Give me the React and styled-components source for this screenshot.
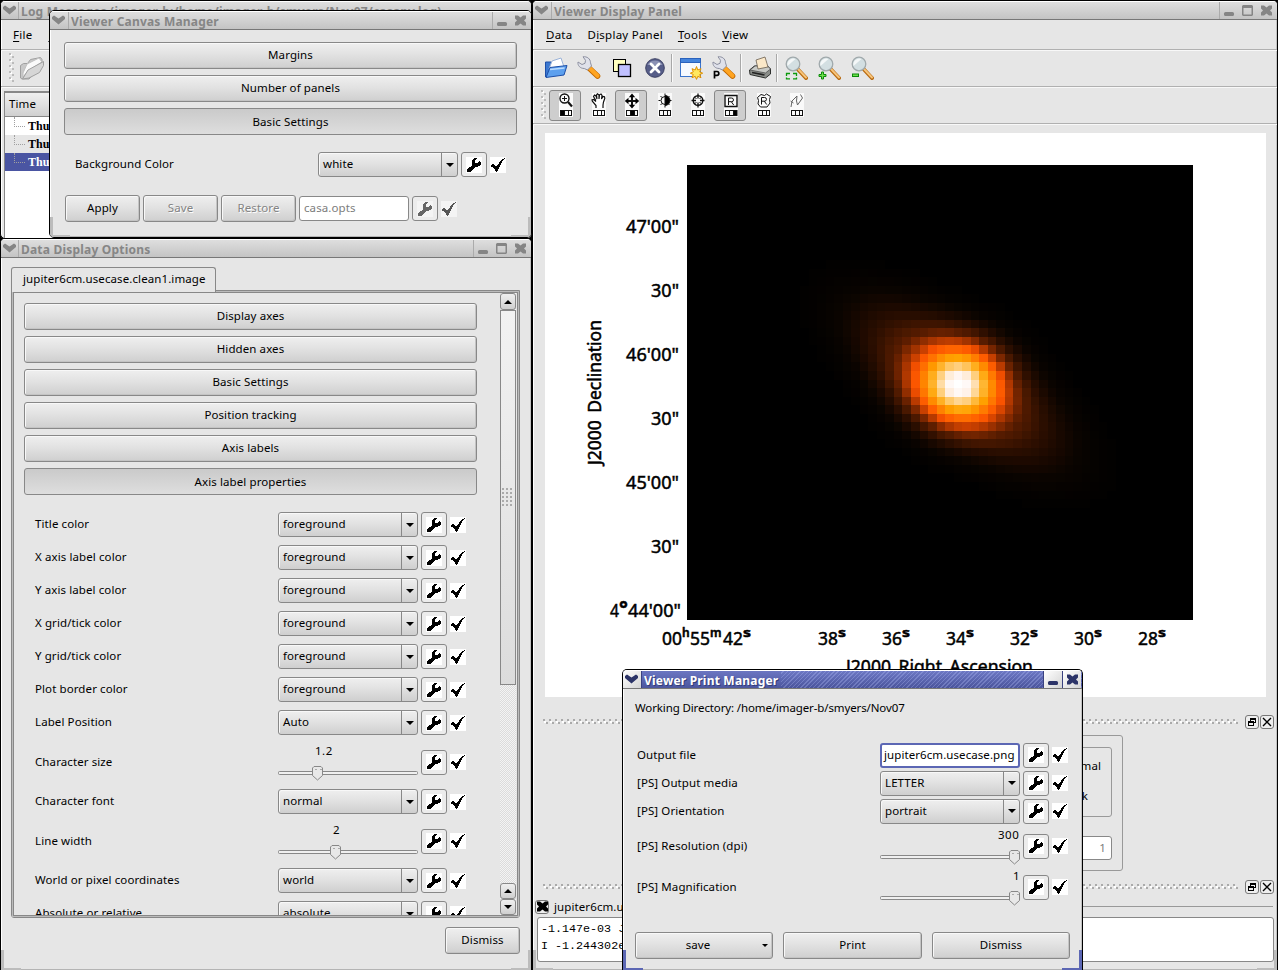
import React from "react";
import styled, { createGlobalStyle, css } from "styled-components";

const Global = createGlobalStyle`
  html, body { margin: 0; padding: 0; background: #000; overflow: hidden; }
  * { box-sizing: border-box; }
  #root { font-family: "Noto Sans", "DejaVu Sans", sans-serif; font-size: 11.5px; letter-spacing: 0.1px; color: #000; line-height: 16px; }
  svg { display: block; flex: none; }
`;

const Desktop = styled.main`
  position: relative;
  width: 1278px;
  height: 970px;
  overflow: hidden;
  background: #000;
`;

/* ---------- window frame ---------- */
const Frame = styled.section`
  position: absolute;
  left: ${(p) => p.$x}px;
  top: ${(p) => p.$y}px;
  width: ${(p) => p.$w}px;
  height: ${(p) => p.$h}px;
  display: flex;
  flex-direction: column;
  border: 1px solid #000;
  border-bottom-width: ${(p) => (p.$open ? 0 : 1)}px;
  border-radius: ${(p) => (p.$open ? "5px 5px 0 0" : "5px")};
  background: #e6e6e6;
  box-shadow: inset 1px 0 0 #fff, inset -1px 0 0 #c2c2c2, inset 0 -1px 0 #b4b4b4;
  overflow: hidden;
`;
const TitleBar = styled.header`
  height: 19px;
  flex: none;
  display: flex;
  align-items: stretch;
  padding-right: 1px;
  border-top: 1px solid #fff;
  border-bottom: 1px solid #777;
  background: ${(p) =>
    p.$active
      ? "repeating-linear-gradient(135deg, rgba(255,255,255,0) 0 2px, rgba(190,200,255,.28) 2px 3px), linear-gradient(#6d78c4, #4a549c)"
      : "linear-gradient(#dedede, #c4c4c4)"};
`;
const TitleText = styled.h1`
  margin: 0;
  flex: 1;
  min-width: 0;
  display: flex;
  align-items: center;
  white-space: nowrap;
  overflow: hidden;
  font-size: 12px;
  font-weight: 700;
  letter-spacing: 0.2px;
  line-height: 16px;
  color: ${(p) => (p.$active ? "#fff" : "#868686")};
  span {
    padding: 3px 3px 0 2px;
    ${(p) => p.$active && css`background: linear-gradient(#6d78c4, #4a549c); text-shadow: 1px 1px 0 #333c78;`}
  }
`;
const TitleButton = styled.span`
  width: ${(p) => p.$w || 19}px;
  flex: none;
  display: flex;
  align-items: center;
  justify-content: center;
  ${(p) => p.$active && css`background: linear-gradient(135deg, #fff, #d4d4d4); border-left: 1px solid #3a4280;`}
  ${(p) => p.$edge === "right" && css`border-right: 1px solid ${p.$active ? "#3a4280" : "#ababab"}; border-left: 0; padding-right: 1px;`}
  ${(p) => p.$edge === "left" && css`border-left: 1px solid ${p.$active ? "#3a4280" : "#ababab"};`}
`;

const Glyph = ({ kind, color }) => (
  <svg width="13" height="13" viewBox="0 0 13 13" fill={color}>
    {kind === "down" && <path d="M0 3 2 1.500l4.500 3L11 1.500 13 3v2L6.500 10.500 0 5z" />}
    {kind === "min" && <rect x="1" y="8" width="10" height="4" rx="1.500" />}
    {kind === "max" && <path d="M2 1h9l1 1v9l-1 1H2l-1-1V2zM2.500 4v6.500h8V4z" fillRule="evenodd" />}
    {kind === "close" && <path d="M1 1.500h3l2.500 2L9 1.500h3v3L10 6.500 12 8.500v3H9L6.500 9.500 4 11.500H1v-3l2-2L1 4.500z" />}
  </svg>
);

function Window({ x, y, w, h, title, buttons = [], active, open, menuWidth = 19, children }) {
  const ink = active ? "#2c3468" : "#858585";
  return (
    <Frame $x={x} $y={y} $w={w} $h={h} $open={open}>
      <TitleBar $active={active}>
        <TitleButton $w={menuWidth} $edge="right" $active={active}><Glyph kind="down" color={ink} /></TitleButton>
        <TitleText $active={active}><span>{title}</span></TitleText>
        {buttons.map((b, i) => (
          <TitleButton key={b} $edge={i === 0 ? "left" : ""} $active={active}><Glyph kind={b} color={ink} /></TitleButton>
        ))}
      </TitleBar>
      {children}
    </Frame>
  );
}

const Grip = styled.i`
  position: absolute;
  bottom: 0;
  ${(p) => p.$side}: 0;
  width: 20px;
  height: 20px;
  border: solid ${(p) => p.$color || "#bcbcbc"};
  border-width: 0 0 2px 0;
  ${(p) => (p.$side === "left" ? css`border-left-width: 3px;` : css`border-right-width: 3px;`)}
`;

/* ---------- bitmap glyphs ---------- */
const Bitmap = ({ rows, color = "#000", bg = "#fff", w = 16, h = 16 }) => {
  const runs = [];
  rows.forEach((r, y) => {
    for (const m of r.matchAll(/x+/g)) runs.push(<rect key={`${y}-${m.index}`} x={m.index} y={y} width={m[0].length} height="1" />);
  });
  return (
    <svg width={w} height={h} viewBox={`0 0 ${w} ${h}`} shapeRendering="crispEdges" fill={color}>
      <rect width={w} height={h} fill={bg} />
      {runs}
    </svg>
  );
};
const WRENCH = [
  "",
  "........xxx",
  ".......xxx",
  "......xxx",
  "......xxx....x",
  "......xxx...xxx",
  "......xxxxxxxxx",
  "......xxxxxxxxx",
  "......xxxxxxxx",
  ".....xxxxxxx",
  "...xxxxxx",
  "..xxxxxx",
  ".xxxxxx",
  ".xxxxx",
  ".xxxx",
  "",
];
const CHECK = [
  "",
  "..............x",
  "............xx",
  "...........xx",
  "..........xx",
  ".........xxx",
  ".........xx",
  "..xx....xxx",
  ".xxxx..xxx",
  ".xxxxxxxxx",
  "...xxxxxx",
  "....xxxxx",
  ".....xxx",
  ".....xxx",
  "......x",
  "",
];

/* ---------- widgets ---------- */
const raised = "linear-gradient(#efefef, #e2e2e2 45%, #cfcfcf)";
const PushButton = styled.button`
  width: ${(p) => (p.$w ? `${p.$w}px` : "100%")};
  height: 27px;
  flex: none;
  padding: ${(p) => (p.$down ? "1px 0 0" : "0 0 1px")};
  border: 1px solid #888;
  border-radius: 3px;
  background: ${(p) => (p.$down ? "linear-gradient(#cacaca, #dedede)" : raised)};
  box-shadow: ${(p) => (p.$down ? "none" : "inset 1px 1px 0 #f8f8f8, inset -1px -1px 0 #c4c4c4")};
  font: inherit;
  letter-spacing: inherit;
  color: ${(p) => (p.$dim ? "#848484" : "#000")};
  text-shadow: ${(p) => (p.$dim ? "1px 1px 0 #fff" : "none")};
  text-align: center;
`;
const Arrow = styled.i`
  width: 0;
  height: 0;
  border: solid transparent;
  ${(p) => (p.$up ? css`border-width: 0 4px 4px; border-bottom-color: #000;` : css`border-width: 4px 4px 0; border-top-color: #000;`)}
  ${(p) => p.$small && css`border-width: 3px 3px 0;`}
`;
const MenuButton = styled(PushButton)`
  display: flex;
  align-items: center;
  padding-right: 4px;
  span { flex: 1; padding-right: 2px; }
`;
const ComboBox = styled.div`
  width: 140px;
  height: 25px;
  flex: none;
  display: flex;
  border: 1px solid #888;
  border-radius: 3px;
  background: ${raised};
  box-shadow: inset 1px 1px 0 #f8f8f8;
`;
const ComboText = styled.span`
  flex: 1;
  padding: 3px 0 0 4px;
`;
const ComboArrow = styled.span`
  width: 16px;
  display: flex;
  align-items: center;
  justify-content: center;
  border-left: 1px solid #888;
`;
const Combo = ({ value }) => (
  <ComboBox>
    <ComboText>{value}</ComboText>
    <ComboArrow><Arrow /></ComboArrow>
  </ComboBox>
);
const Field = styled.div`
  width: ${(p) => p.$w}px;
  height: 25px;
  flex: none;
  padding: 3px 4px;
  background: #fff;
  white-space: nowrap;
  overflow: hidden;
  border: ${(p) => (p.$focus ? "2px solid #5c67b4" : "1px solid #888")};
  border-radius: 3px;
  ${(p) => p.$focus && css`padding: 2px 0 0 2px; letter-spacing: 0.08px;`}
  color: ${(p) => (p.$dim ? "#7c7c7c" : "#000")};
`;
const IconBox = styled.span`
  width: 26px;
  height: 25px;
  flex: none;
  margin-left: 3px;
  margin-right: 3px;
  display: flex;
  align-items: center;
  justify-content: center;
  border: 1px solid #888;
  border-radius: 3px;
  background: #ececec;
`;
const Tools = ({ dim }) => (
  <>
    <IconBox><Bitmap rows={WRENCH} color={dim ? "#666" : "#000"} bg={dim ? "#f4f4f4" : "#fff"} /></IconBox>
    <Bitmap rows={CHECK} color={dim ? "#555" : "#000"} bg={dim ? "#f4f4f4" : "#fff"} />
  </>
);

const SliderBox = styled.div`
  width: 140px;
  height: 42px;
  padding-top: 1px;
  flex: none;
  display: flex;
  flex-direction: column;
`;
const SliderValue = styled.span`
  height: 23px;
  line-height: 17px;
  display: flex;
  padding-left: ${(p) => p.$at}px;
  white-space: nowrap;
  letter-spacing: 0.5px;
`;
const Slider = ({ value, at, textAt }) => (
  <SliderBox>
    <SliderValue $at={textAt}>{value}</SliderValue>
    <svg width="140" height="16" viewBox="0 0 140 16">
      <rect x=".5" y="6.500" width="139" height="3" rx="1" fill="#f0f0f0" stroke="#888" />
      <path d={`M${at - 4} 1.500h7l1.500 1.500v7.500l-5 4.500-5-4.500V3z`} fill="#e8e8e8" stroke="#888" />
      <path d={`M${at - 3} 4.500h2m3 0h2`} stroke="#aaa" />
    </svg>
  </SliderBox>
);

const OptionRow = styled.div`
  display: flex;
  align-items: center;
  flex: none;
  height: ${(p) => p.$h}px;
`;
const OptionLabel = styled.span`
  width: ${(p) => p.$w}px;
  flex: none;
  padding-bottom: 1px;
  white-space: nowrap;
`;

/* ---------- log window ---------- */
const MenuBar = styled.nav`
  height: 30px;
  flex: none;
  display: flex;
  align-items: center;
  gap: ${(p) => p.$gap || 16}px;
  padding: 1px 0 0 ${(p) => p.$pad || 12}px;
  letter-spacing: 0.25px;
  border-bottom: 1px solid #b0b0b0;
  box-shadow: 0 1px 0 #f8f8f8;
  u { text-underline-offset: 2px; }
`;
const ToolBar = styled.div`
  height: 37px;
  flex: none;
  display: flex;
  align-items: center;
  padding-left: ${(p) => p.$pad}px;
  border-bottom: 1px solid #b0b0b0;
  box-shadow: 0 1px 0 #f8f8f8;
`;
const Handle = styled.i`
  width: 6px;
  height: 30px;
  flex: none;
  margin-right: ${(p) => p.$gap || 0}px;
  background-image: radial-gradient(circle at 1px 1px, #bbb 1px, transparent 1.2px), radial-gradient(circle at 4px 4px, #bbb 1px, transparent 1.2px), radial-gradient(circle at 2px 2px, #fff 1px, transparent 1.2px);
  background-size: 6px 6px;
`;
const LogTable = styled.div`
  margin: 4px 0 0 3px;
  flex: 1;
  border: 1px solid #888;
  border-bottom: 0;
  background: #fff;
`;
const LogHead = styled.div`
  height: 25px;
  padding: 3px 0 0 4px;
  border-top: 1px solid #888;
  border-bottom: 1px solid #888;
  background: ${raised};
`;
const LogRow = styled.div`
  height: 18px;
  padding-left: 23px;
  font: 700 12px/18px "Liberation Serif", serif;
  letter-spacing: 0;
  position: relative;
  background: ${(p) => p.$bg};
  color: ${(p) => p.$fg || "#000"};
  &::before {
    content: "";
    position: absolute;
    left: 9px;
    top: 0;
    width: 10px;
    height: 9px;
    border-left: 1px dotted #a0a0a0;
    border-bottom: 1px dotted #a0a0a0;
  }
`;
const GrayFolder = () => (
  <svg width="26" height="26" viewBox="0 0 26 26" stroke="#a0a0a0">
    <path d="M1.500 23V10.500l3-2h4l3-4 10-2 1.500 2v6L10 24H3z" fill="#c8c8c8" />
    <path d="M4 18 8 9 20 3l3 4-14 9-5 6z" fill="#fafafa" stroke="#c0c0c0" />
    <path d="M3.500 24 9 15l15.500-8.500v4l-4 7L10 23z" fill="#d6d6d6" />
  </svg>
);

/* ---------- data options ---------- */
const OptionsBody = styled.div`
  flex: 1;
  display: flex;
  flex-direction: column;
  padding: 9px 11px 14px 10px;
`;
const Tab = styled.div`
  width: 205px;
  height: 25px;
  flex: none;
  padding: 3px 0 0 11px;
  border: 1px solid #888;
  border-bottom: 0;
  border-radius: 3px 3px 0 0;
  margin-bottom: -2px;
  background: #e6e6e6;
  z-index: 1;
  white-space: nowrap;
`;
const TabPane = styled.div`
  height: 628px;
  flex: none;
  display: flex;
  border: 1px solid #888;
  border-radius: 0 0 3px 3px;
  padding: 1px;
`;
const ScrollArea = styled.div`
  flex: 1;
  display: flex;
  border: 1px solid #888;
  box-shadow: 0 0 0 1px #bbb;
  overflow: hidden;
`;
const ScrollContent = styled.div`
  flex: 1;
  display: flex;
  flex-direction: column;
  padding: 10px 0 0 10px;
  overflow: hidden;
`;
const ButtonStack = styled.div`
  width: 453px;
  flex: none;
  display: flex;
  flex-direction: column;
  gap: 6px;
`;
const Rows = styled.div`
  padding: ${(p) => p.$pad};
  display: flex;
  flex-direction: column;
  flex: none;
`;
const ScrollBar = styled.div`
  width: 16px;
  flex: none;
  display: flex;
  flex-direction: column;
  margin-right: 1px;
  background: repeating-conic-gradient(#f4f4f4 0 25%, #dcdcdc 0 50%) 0 0 / 2px 2px;
`;
const ScrollButton = styled.span`
  height: ${(p) => p.$h || 16}px;
  flex: none;
  display: flex;
  align-items: center;
  justify-content: center;
  border: 1px solid #888;
  border-radius: 3px;
  background: ${raised};
`;
const Thumb = styled.span`
  height: 375px;
  flex: none;
  margin-bottom: auto;
  display: flex;
  align-items: center;
  justify-content: center;
  border: 1px solid #888;
  background: linear-gradient(#f2f2f2, #dcdcdc);
`;
const ThumbDots = styled.i`
  width: 12px;
  height: 20px;
  background-image: radial-gradient(circle at 1px 1px, #aaa 0.8px, transparent 1.1px);
  background-size: 4px 4px;
`;
const Right = styled.div`
  display: flex;
  justify-content: flex-end;
  padding-top: ${(p) => p.$top}px;
`;

/* ---------- viewer ---------- */
const ToolCell = styled.span`
  width: 33px;
  height: 33px;
  flex: none;
  display: flex;
  align-items: center;
  justify-content: center;
`;
const ToolSep = styled.i`
  width: 2px;
  height: 28px;
  flex: none;
  margin-right: 1px;
  border-left: 1px solid #a8a8a8;
  border-right: 1px solid #fafafa;
`;
const ModeButton = styled.span`
  width: 32px;
  height: 31px;
  margin-right: 1px;
  flex: none;
  display: flex;
  align-items: center;
  justify-content: center;
  padding-left: 1px;
  border: 1px solid ${(p) => (p.$on ? "#888" : "transparent")};
  border-radius: 3px;
  background: ${(p) => (p.$on ? "#cecece" : "transparent")};
`;
const Lens = () => (
  <>
    <path d="M14 13.500 22 22" stroke="#b86a10" strokeWidth="4" strokeLinecap="round" />
    <path d="M14.500 13.500 22 21.500" stroke="#f7c47a" strokeWidth="2" strokeLinecap="round" />
    <circle cx="9" cy="8" r="6.800" fill="#d3dfe2" stroke="#a0a9ac" strokeWidth="1.300" />
    <path d="M3.500 10a6 6 0 0 1 8-7z" fill="#fff" opacity=".75" />
  </>
);
const Spanner = () => (
  <>
    <path d="M12 12 20.500 20" stroke="#c46a00" strokeWidth="5.600" strokeLinecap="round" />
    <path d="M12.500 12 20.500 19.800" stroke="#ffa522" strokeWidth="4" strokeLinecap="round" />
    <path d="M6 .8c4-.6 7.500 2 7.500 6l1 3.200-4 4-3.200-1.500C3 12.500.5 9.500 1 6L5 8.500l3-1.200.5-3z" fill="#dfe1ea" stroke="#8d90a0" />
  </>
);
const toolIcons = {
  open: (
    <>
      <path d="M1.500 21V6h6l2 2.500h8V12" fill="#3c78d0" stroke="#1d4fa8" />
      <path d="M5 13 8 5l9-3 3 9z" fill="#fff" stroke="#9ab2d8" />
      <path d="M2 21.500 6 11.500l17-2L20 19z" fill="#5da0ee" stroke="#1d4fa8" />
      <path d="M6 13.500 20.500 12" stroke="#bcdcff" strokeWidth="1.500" />
    </>
  ),
  spanner: <Spanner />,
  layers: (
    <>
      <rect x="3.500" y="3.500" width="12" height="12" fill="#ffffc0" stroke="#000" />
      <rect x="8.500" y="8.500" width="12" height="12" fill="#c0c0ff" stroke="#000" strokeWidth="1.300" />
    </>
  ),
  remove: (
    <>
      <circle cx="12" cy="12" r="9.300" fill="#565d88" stroke="#3c4164" />
      <path d="M4.500 9a8 7 0 0 1 15 0z" fill="#8b91b4" />
      <path d="m8 8 8 8m0-8-8 8" stroke="#fff" strokeWidth="2.800" strokeLinecap="round" />
    </>
  ),
  panel: (
    <>
      <rect x="1.500" y="2.500" width="20" height="18" fill="#f6faff" stroke="#3a74cc" />
      <rect x="1.500" y="2.500" width="20" height="4" fill="#4484dc" stroke="#2a62bc" />
      <path d="m17.500 10.500 1.300 3.500 3.200-1.300-1.300 3.200 3 1.300-3 1.300 1.300 3.200-3.200-1.300-1.300 3-1.300-3-3.200 1.300 1.300-3.200-3-1.300 3-1.300-1.300-3.200 3.200 1.300z" fill="#ffe860" stroke="#e09000" />
    </>
  ),
  printMgr: (
    <>
      <Spanner />
      <path d="M2.500 22.500v-7h2.500q1.800 0 1.800 1.900t-1.800 1.900H2.500" fill="none" stroke="#000" strokeWidth="1.700" />
    </>
  ),
  printer: (
    <>
      <path d="m1.500 14 5-4h13l3 3v5l-5 4L2 18.500z" fill="#8b8e8a" stroke="#2d2f2d" />
      <path d="m2 14 5-4h12.500l3 3-5 4z" fill="#c8cac6" stroke="#444" strokeWidth=".7" />
      <path d="m10 13-2-9 9-3 3 10z" fill="#fbe8c8" stroke="#6b6050" strokeWidth=".8" />
      <path d="m4 16.500 12.500 2.500" stroke="#222" strokeWidth="1.600" />
    </>
  ),
  fit: (
    <>
      <Lens />
      <path d="M6 17.500H2.500V20M2.500 21.500v1.300H6m3-5.300h3.500V20m0 1.500v1.300H9" fill="none" stroke="#0c9a0c" strokeWidth="1.300" />
    </>
  ),
  zoomIn: (
    <>
      <Lens />
      <path d="M4.500 16h2v2.500H9v2H6.500V23h-2v-2.500H2v-2h2.500z" fill="#6fe04c" stroke="#0b8a0b" />
    </>
  ),
  zoomOut: (
    <>
      <Lens />
      <rect x="2.500" y="18" width="6" height="2.500" fill="#6fe04c" stroke="#0b8a0b" />
    </>
  ),
};
const ToolIcon = ({ name }) => (
  <svg width="24" height="24" viewBox="0 0 24 24" fill="none">{toolIcons[name]}</svg>
);

const modeArt = {
  zoom: (
    <>
      <circle cx="6.500" cy="5.500" r="4.500" strokeWidth="1.400" />
      <path d="M10 9l4 4.500" strokeWidth="2.200" />
      <path d="M4 5.500h5M6.500 3v5" />
    </>
  ),
  pan: (
    <>
      <path d="M5 15v-2.500L1.500 8.500 1 7l1.500-.5L4.500 8V7L2.500 3.500 3.500 2 5 3l1 3-.5-4L6.500.8 8 2v4l.5-4.200L10 1l1 1.500L10.500 6 12 3.500l1.500.3.3 1.700L12.500 9l-.5 3v3" fill="#fff" strokeWidth="1.200" />
    </>
  ),
  move: (
    <>
      <path d="M8 2v12M2 8h12" strokeWidth="2" />
      <path d="M8 .5 4.800 4.200h6.400zM8 15.500l-3.200-3.700h6.400zM.8 8l3.700-3.200v6.400zM15.200 8l-3.700-3.200v6.400z" fill="#000" stroke="none" />
    </>
  ),
  contrast: (
    <>
      <circle cx="8" cy="7.500" r="4" />
      <path d="M8 2.500a5 5 0 0 1 0 10z" fill="#000" />
      <path d="M8 .5v2m0 10v2M1.500 7.500h2m9 0h2M3.500 3l1.500 1.500M12.500 3 11 4.500M3.500 12 5 10.500m7.500 1.500L11 10.500" />
    </>
  ),
  target: (
    <>
      <circle cx="8" cy="7.500" r="4.800" strokeWidth="1.400" />
      <path d="M8 .5v5m0 4v5M1.500 7.500h4.500m4 0h4.500" strokeWidth="1.300" />
      <path d="m4.500 4 2 2m5-2-2 2m-5 5 2-2m5 2-2-2" />
    </>
  ),
  rect: (
    <>
      <path d="M2 2.500h12v11H2z" strokeWidth="1.400" />
      <path d="M5.500 12V5H8.500q2 0 2 1.900t-2 1.800H5.500M8.300 8.700l2.400 3.300" />
    </>
  ),
  poly: (
    <>
      <path d="M5 1.500 8.500 2.500l2-1.500 4 2.500-1 3 .5 3.500-3 4H4.500L2 11l.5-3.500-1-3z" />
      <path d="M5.500 11.500V4.500H8.500q2 0 2 1.800t-2 1.900H5.500M8.300 8.200l2.400 3.300" />
    </>
  ),
  line: <path d="m2 14 1-6 5-5-.5 5 1 4L13.500 5l-2-3.500M1.500 8 4.500 10" stroke="#666" />,
};
const ModeIcon = ({ name, hot }) => (
  <svg width="16" height="24" viewBox="0 0 16 24" fill="none" stroke="#111">
    <rect x="1" width="14" height="24" fill="#fafafa" stroke="none" />
    {modeArt[name]}
    <path d="M2.500 17.500h11v5h-11zM6.500 17v6M10.500 17v6" shapeRendering="crispEdges" />
    {hot !== undefined && <rect x={2.5 + hot * 4} y="17.500" width={hot === 2 ? 3.5 : 4} height="5" fill="#000" />}
  </svg>
);

const ViewerBody = styled.div`
  flex: 1;
  display: flex;
  flex-direction: column;
  padding: 9px 4px 0 12px;
`;
const DockBar = styled.div`
  display: flex;
  align-items: center;
  gap: 1px;
  height: 14px;
  flex: none;
  margin: ${(p) => p.$top}px 0 0 -2px;
`;
const DockDots = styled.i`
  width: 696px;
  height: 6px;
  flex: none;
  margin-right: 5px;
  background-image: radial-gradient(circle at 1px 1px, #aaa 0.9px, transparent 1.2px), radial-gradient(circle at 4px 4px, #aaa 0.9px, transparent 1.2px), radial-gradient(circle at 2px 3px, #fff 1px, transparent 1.2px);
  background-size: 6px 6px;
`;
const DockButton = styled.span`
  width: 14px;
  height: 14px;
  flex: none;
  display: flex;
  align-items: center;
  justify-content: center;
  border: 1px solid #777;
  border-radius: 3px;
  background: #eee;
`;
const Dock = ({ top }) => (
  <DockBar $top={top}>
    <DockDots />
    <DockButton>
      <svg width="10" height="10" viewBox="0 0 10 10" fill="none" stroke="#000" shapeRendering="crispEdges">
        <path d="M3.500 4V1.500h5v4H6.500M3 2h6M1.500 4.500h5v4h-5zM1 5h6" />
      </svg>
    </DockButton>
    <DockButton>
      <svg width="10" height="10" viewBox="0 0 10 10" stroke="#000" strokeWidth="1.400"><path d="m1 1 8 8m0-8L1 9" /></svg>
    </DockButton>
  </DockBar>
);
const AnimatorArea = styled.div`
  height: 142px;
  flex: none;
  padding-top: 6px;
  padding-left: 300px;
`;
const AnimatorBox = styled.div`
  width: 278px;
  height: 136px;
  padding: 11px 10px 0 100px;
  display: flex;
  flex-direction: column;
  border: 1px solid #999;
  border-radius: 3px;
`;
const ModeGroup = styled.div`
  height: 70px;
  flex: none;
  margin-bottom: 19px;
  padding: 10px 10px 0 107px;
  display: flex;
  flex-direction: column;
  gap: 14px;
  align-items: flex-start;
  border: 1px solid #999;
  border-radius: 3px;
`;
const ModeLabel = styled.span`
  width: ${(p) => p.$w}px;
  display: flex;
  justify-content: flex-end;
  white-space: nowrap;
`;
const FrameField = styled(Field)`
  height: 24px;
  text-align: right;
  padding: 3px 5px 0 0;
`;
const TrackHead = styled.div`
  display: flex;
  align-items: center;
  gap: 5px;
  height: 21px;
  flex: none;
  margin: 2px 0 0 -10px;
  &::after { content: ""; flex: 1; border-top: 1px solid #999; }
`;
const TrackText = styled.pre`
  height: 45px;
  flex: none;
  margin: 0 0 0 -8px;
  padding: 3px 0 0 3px;
  width: 737px;
  border: 1px solid #888;
  border-radius: 3px;
  background: #fff;
  font: 11.7px/17px "Liberation Mono", monospace;
  letter-spacing: 0;
`;

/* ---------- sky image ---------- */
const RAMP = [
  [0, 0, 0, 0], [0.05, 10, 4, 0], [0.1, 28, 9, 0], [0.15, 46, 15, 0], [0.2, 70, 23, 0], [0.25, 88, 28, 0],
  [0.32, 140, 44, 0], [0.4, 196, 62, 0], [0.47, 250, 82, 0], [0.53, 255, 98, 0], [0.6, 255, 124, 0],
  [0.7, 255, 162, 0], [0.8, 255, 188, 66], [0.88, 255, 218, 160], [0.95, 255, 244, 240], [1, 255, 255, 255],
];
function heat(v) {
  const t = Math.min(1, v);
  let i = 1;
  while (RAMP[i][0] < t) i++;
  const a = RAMP[i - 1];
  const b = RAMP[i];
  const f = (t - a[0]) / (b[0] - a[0]);
  return `rgb(${[1, 2, 3].map((k) => Math.round(a[k] + (b[k] - a[k]) * f)).join(",")})`;
}
const STEP = 8.54;
function skyCells() {
  const cells = [];
  for (let j = 0; j < 54; j++) {
    for (let i = 0; i < 61; i++) {
      const x = -6.6 + i * STEP;
      const y = -7.5 + j * STEP;
      const dx = x + STEP / 2 - 271.4;
      const dy = y + STEP / 2 - 219.4;
      const along = dx * 0.82 + dy * 0.57;
      const perp = -dx * 0.57 + dy * 0.82;
      const q = (along * along) / 13500 + (perp * perp) / 2500;
      const v = 0.74 * Math.exp(-(dx * dx) / 1900 - (dy * dy) / 1500) + 0.26 * Math.exp(-Math.pow(q, 1.35));
      if (v > 0.008) cells.push(<rect key={`${i}-${j}`} x={x} y={y} width={STEP} height={STEP} fill={heat(v)} />);
    }
  }
  return cells;
}
const SKY = skyCells();
const DEC = [["47'00\"", 226], ["30\"", 290], ["46'00\"", 354], ["30\"", 418], ["45'00\"", 482], ["30\"", 546]];
const RA = [["38", 818], ["36", 882], ["34", 946], ["32", 1010], ["30", 1074], ["28", 1138]];

const SkyPlot = () => (
  <svg width="721" height="564" viewBox="545 133 721 564" fontFamily='"Noto Sans", sans-serif' fontSize="18" fontWeight="400" letterSpacing="0" stroke="#000" strokeWidth=".5">
    <rect x="545" y="133" width="721" height="564" fill="#fff" stroke="none" />
    <svg x="687" y="165" width="506" height="455" viewBox="0 0 506 455" stroke="none">
      <rect width="506" height="455" fill="#000" />
      <g shapeRendering="crispEdges">{SKY}</g>
    </svg>
    {DEC.map(([t, y]) => (
      <text key={y} x={t.length > 3 ? 626 : 651} y={y + 7} textLength={t.length > 3 ? 53 : 28} lengthAdjust="spacingAndGlyphs">{t}</text>
    ))}
    <text x="610" y="617" textLength="9" lengthAdjust="spacingAndGlyphs">4</text>
    <text x="619" y="616" fontSize="21" fontWeight="700">°</text>
    <text x="628" y="617" textLength="53" lengthAdjust="spacingAndGlyphs">44'00"</text>
    <text x="662" y="645" textLength="20" lengthAdjust="spacingAndGlyphs">00</text>
    <text x="682" y="637" fontSize="12" fontWeight="600">h</text>
    <text x="690" y="645" textLength="20" lengthAdjust="spacingAndGlyphs">55</text>
    <text x="710" y="637" fontSize="12" fontWeight="600">m</text>
    <text x="723" y="645" textLength="20" lengthAdjust="spacingAndGlyphs">42</text>
    <text x="743" y="637" fontSize="13" fontWeight="700" textLength="8" lengthAdjust="spacingAndGlyphs">s</text>
    {RA.map(([t, x]) => (
      <React.Fragment key={x}>
        <text x={x} y="645" textLength="20" lengthAdjust="spacingAndGlyphs">{t}</text>
        <text x={x + 20} y="637" fontSize="13" fontWeight="700" textLength="8" lengthAdjust="spacingAndGlyphs">s</text>
      </React.Fragment>
    ))}
    <text x="846" y="673" textLength="187" wordSpacing="3" lengthAdjust="spacingAndGlyphs">J2000 Right Ascension</text>
    <text transform="translate(601 465) rotate(-90)" textLength="145" wordSpacing="3" lengthAdjust="spacingAndGlyphs">J2000 Declination</text>
  </svg>
);

/* ---------- dialogs ---------- */
const CanvasBody = styled.div`
  padding: 12px 14px;
  display: flex;
  flex-direction: column;
`;
const ActionRow = styled.div`
  display: flex;
  align-items: center;
  gap: 3px;
  padding-left: 1px;
  margin-top: 14px;
  ${IconBox} { margin: 0; }
`;
const PrintBody = styled.div`
  padding: 11px 12px 0;
  display: flex;
  flex-direction: column;
`;
const PathLine = styled.span`
  letter-spacing: -0.12px;
`;
const PrintRows = styled.div`
  padding: 25px 0 0 2px;
  display: flex;
  flex-direction: column;
`;
const PrintActions = styled.div`
  display: flex;
  justify-content: space-between;
  margin-top: 25px;
`;

const sections = ["Display axes", "Hidden axes", "Basic Settings", "Position tracking", "Axis labels"];
const colorRows = ["Title color", "X axis label color", "Y axis label color", "X grid/tick color", "Y grid/tick color", "Plot border color"];

const ComboRow = ({ label, value, h = 33, w = 243 }) => (
  <OptionRow $h={h}>
    <OptionLabel $w={w}>{label}</OptionLabel>
    <Combo value={value} />
    <Tools />
  </OptionRow>
);
const SliderRow = ({ label, h, w = 243, ...slider }) => (
  <OptionRow $h={h}>
    <OptionLabel $w={w}>{label}</OptionLabel>
    <Slider {...slider} />
    <Tools />
  </OptionRow>
);

export default function App() {
  return (
    <>
      <Global />
      <Desktop>
        <Window x={0} y={0} w={532} h={239} menuWidth={18} title="Log Messages (imager-b:/home/imager-b/smyers/Nov07/casapy.log)">
          <MenuBar><span><u>F</u>ile</span><span><u>E</u>dit</span></MenuBar>
          <ToolBar $pad={8}><Handle /><ToolCell><GrayFolder /></ToolCell></ToolBar>
          <LogTable>
            <LogHead>Time</LogHead>
            <LogRow $bg="#fff">Thu</LogRow>
            <LogRow $bg="#e6e6e6">Thu</LogRow>
            <LogRow $bg="#4a55a2" $fg="#fff">Thu</LogRow>
          </LogTable>
        </Window>

        <Window x={0} y={238} w={532} h={732} menuWidth={18} title="Data Display Options" buttons={["min", "max", "close"]} open>
          <OptionsBody>
            <Tab>jupiter6cm.usecase.clean1.image</Tab>
            <TabPane>
              <ScrollArea>
                <ScrollContent>
                  <ButtonStack>
                    {sections.map((s) => <PushButton key={s}>{s}</PushButton>)}
                    <PushButton $down>Axis label properties</PushButton>
                  </ButtonStack>
                  <Rows $pad="13px 0 0 11px">
                    {colorRows.map((label) => <ComboRow key={label} label={label} value="foreground" />)}
                    <ComboRow label="Label Position" value="Auto" />
                    <SliderRow label="Character size" h={46} value="1.2" at={40} textAt={37} />
                    <ComboRow label="Character font" value="normal" />
                    <SliderRow label="Line width" h={46} value="2" at={58} textAt={55} />
                    <ComboRow label="World or pixel coordinates" value="world" />
                    <ComboRow label="Absolute or relative" value="absolute" />
                  </Rows>
                </ScrollContent>
                <ScrollBar>
                  <ScrollButton $h={17}><Arrow $up /></ScrollButton>
                  <Thumb><ThumbDots /></Thumb>
                  <ScrollButton><Arrow $up /></ScrollButton>
                  <ScrollButton><Arrow /></ScrollButton>
                </ScrollBar>
              </ScrollArea>
            </TabPane>
            <Right $top={9}><PushButton $w={75}>Dismiss</PushButton></Right>
          </OptionsBody>
          <Grip $side="left" /><Grip $side="right" />
        </Window>

        <Window x={49} y={10} w={483} h={228} title="Viewer Canvas Manager" buttons={["min", "close"]}>
          <CanvasBody>
            <ButtonStack>
              <PushButton>Margins</PushButton>
              <PushButton>Number of panels</PushButton>
              <PushButton $down>Basic Settings</PushButton>
            </ButtonStack>
            <Rows $pad="13px 0 0 11px"><ComboRow label="Background Color" value="white" /></Rows>
            <ActionRow>
              <PushButton $w={75}>Apply</PushButton>
              <PushButton $w={75} $dim>Save</PushButton>
              <PushButton $w={75} $dim>Restore</PushButton>
              <Field $w={110} $dim>casa.opts</Field>
              <Tools dim />
            </ActionRow>
          </CanvasBody>
          <Grip $side="left" /><Grip $side="right" />
        </Window>

        <Window x={532} y={0} w={746} h={970} title="Viewer Display Panel" buttons={["min", "max", "close"]} open>
          <MenuBar $pad={13} $gap={15}>
            <span><u>D</u>ata</span>
            <span>D<u>i</u>splay Panel</span>
            <span><u>T</u>ools</span>
            <span><u>V</u>iew</span>
          </MenuBar>
          <ToolBar $pad={6}>
            {["open", "spanner", "layers", "remove"].map((n) => <ToolCell key={n}><ToolIcon name={n} /></ToolCell>)}
            <ToolSep />
            {["panel", "printMgr"].map((n) => <ToolCell key={n}><ToolIcon name={n} /></ToolCell>)}
            <ToolSep />
            <ToolCell><ToolIcon name="printer" /></ToolCell>
            <ToolSep />
            {["fit", "zoomIn", "zoomOut"].map((n) => <ToolCell key={n}><ToolIcon name={n} /></ToolCell>)}
          </ToolBar>
          <ToolBar $pad={8}>
            <Handle $gap={2} />
            <ModeButton $on><ModeIcon name="zoom" hot={0} /></ModeButton>
            <ModeButton><ModeIcon name="pan" /></ModeButton>
            <ModeButton $on><ModeIcon name="move" hot={1} /></ModeButton>
            <ModeButton><ModeIcon name="contrast" /></ModeButton>
            <ModeButton><ModeIcon name="target" /></ModeButton>
            <ModeButton $on><ModeIcon name="rect" hot={2} /></ModeButton>
            <ModeButton><ModeIcon name="poly" /></ModeButton>
            <ModeButton><ModeIcon name="line" /></ModeButton>
          </ToolBar>
          <ViewerBody>
            <SkyPlot />
            <Dock top={18} />
            <AnimatorArea>
              <AnimatorBox>
                <ModeGroup>
                  <ModeLabel $w={47}>Normal</ModeLabel>
                  <ModeLabel $w={34}>Blink</ModeLabel>
                </ModeGroup>
                <FrameField $w={166} $dim>1</FrameField>
              </AnimatorBox>
            </AnimatorArea>
            <Dock top={9} />
            <TrackHead>
              <DockButton><Glyph kind="close" color="#000" /></DockButton>
              jupiter6cm.usecase.clean1.image
            </TrackHead>
            <TrackText>{"-1.147e-03 Jy/beam\nI -1.244302e-03"}</TrackText>
          </ViewerBody>
          <Grip $side="left" /><Grip $side="right" />
        </Window>

        <Window x={622} y={669} w={461} h={301} title="Viewer Print Manager" buttons={["min", "close"]} active open>
          <PrintBody>
            <PathLine>Working Directory: /home/imager-b/smyers/Nov07</PathLine>
            <PrintRows>
              <OptionRow $h={28}>
                <OptionLabel $w={243}>Output file</OptionLabel>
                <Field $w={140} $focus>jupiter6cm.usecase.png</Field>
                <Tools />
              </OptionRow>
              <ComboRow label="[PS] Output media" value="LETTER" h={28} />
              <ComboRow label="[PS] Orientation" value="portrait" h={28} />
              <SliderRow label="[PS] Resolution (dpi)" h={42} value="300" at={135} textAt={118} />
              <SliderRow label="[PS] Magnification" h={40} value="1" at={135} textAt={133} />
            </PrintRows>
            <PrintActions>
              <MenuButton $w={138}><span>save</span><Arrow $small /></MenuButton>
              <PushButton $w={139}>Print</PushButton>
              <PushButton $w={138}>Dismiss</PushButton>
            </PrintActions>
          </PrintBody>
          <Grip $side="left" $color="#5c67b4" /><Grip $side="right" $color="#5c67b4" />
        </Window>
      </Desktop>
    </>
  );
}
